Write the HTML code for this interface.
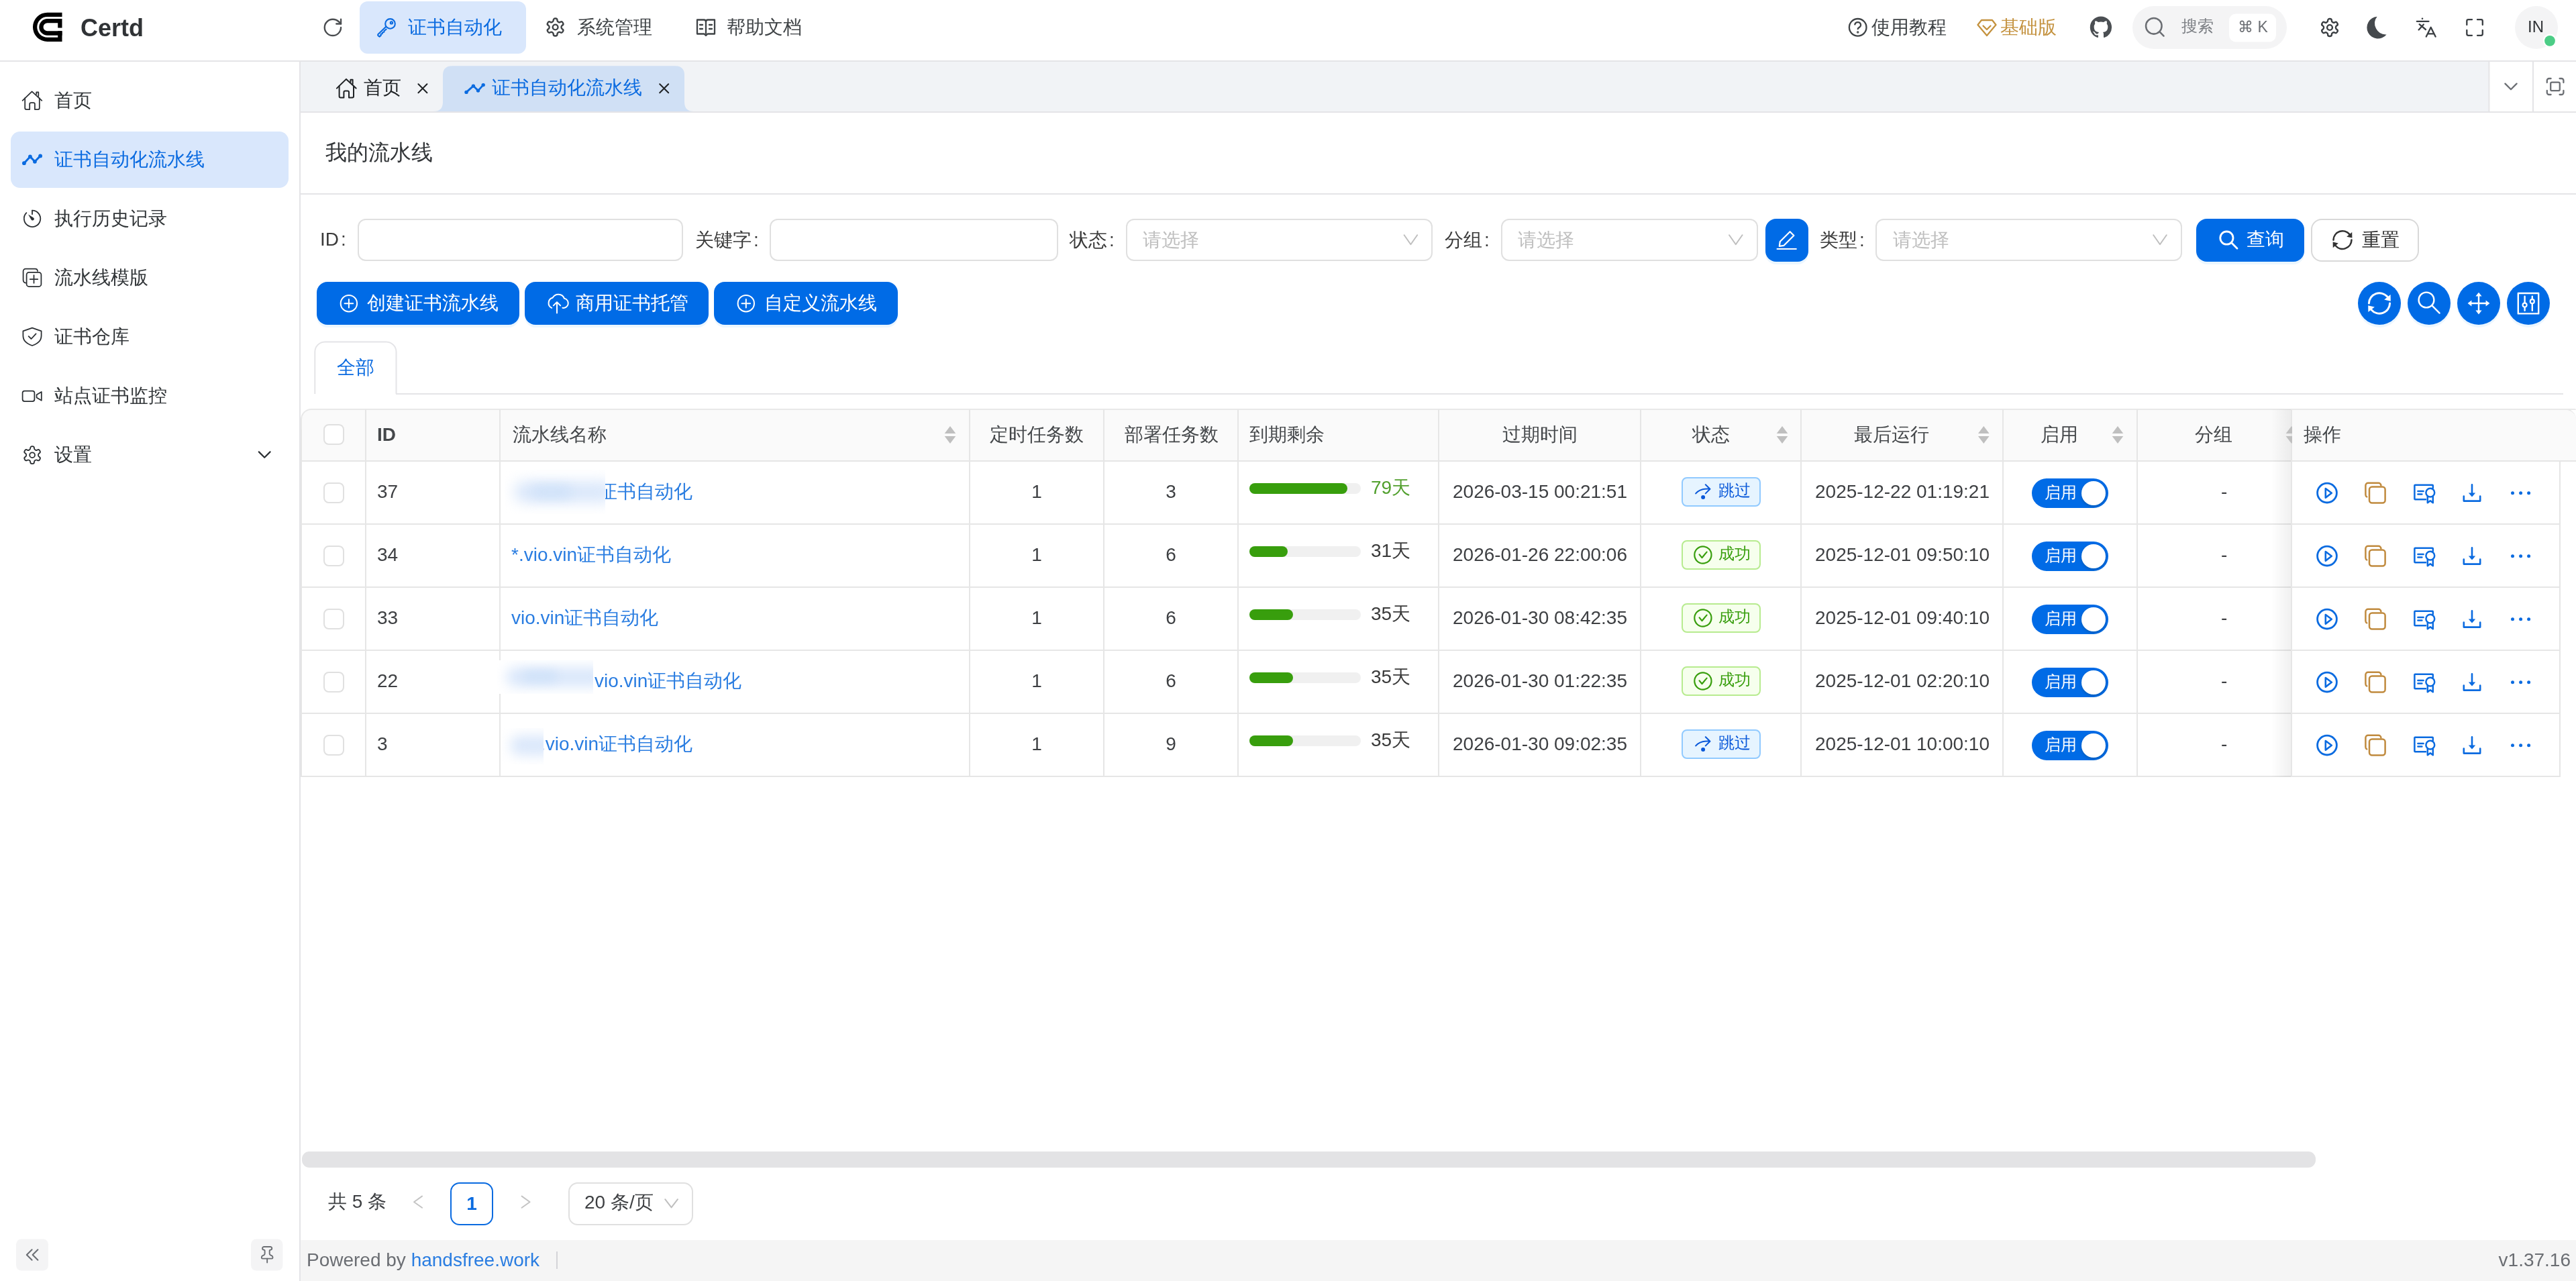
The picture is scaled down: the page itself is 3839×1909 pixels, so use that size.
<!DOCTYPE html>
<html><head><meta charset="utf-8">
<style>
*{box-sizing:border-box;margin:0;padding:0}
html,body{width:3839px;height:1909px;overflow:hidden;background:#fff}
body{position:relative;will-change:transform;font-family:"Liberation Sans",sans-serif;font-size:28px;line-height:28px;color:#323639}
.a{position:absolute;white-space:nowrap}
svg{display:block;overflow:visible}
.ic{fill:none;stroke-linecap:round;stroke-linejoin:round}
/* header */
#hdr{position:absolute;left:0;top:0;width:3839px;height:92px;background:#fff;border-bottom:2px solid #e4e4e7}
/* sidebar */
#side{position:absolute;left:0;top:92px;width:448px;height:1817px;background:#fff;border-right:2px solid #e4e4e7}
.mi{position:absolute;left:16px;width:414px;height:84px;border-radius:12px;display:flex;align-items:center}
.mi .t{position:absolute;left:65px;top:27px;color:#323639}
.mi svg{position:absolute;left:17px}
.mi.act{background:#d9e9fb}
.mi.act .t{color:#0b6be0}
/* tabbar */
#tabs{position:absolute;left:448px;top:92px;width:3391px;height:76px;background:#f1f3f6;border-bottom:2px solid #e4e4e7}
/* content */
#content{position:absolute;left:448px;top:168px;width:3391px;height:1680px;background:#fff}
#footer{position:absolute;left:448px;top:1848px;width:3391px;height:61px;background:#f5f5f5}
.inp{position:absolute;top:326px;height:63px;border:2px solid #e0e0e0;border-radius:12px;background:#fff}
.ph{position:absolute;top:16px;color:#bfbfbf}
.lbl{position:absolute;top:344px;color:#3a3a3a}
.btn{position:absolute;border-radius:16px;background:#006be6;color:#fff;box-shadow:0 4px 0 rgba(5,145,255,0.08)}
.rbtn{position:absolute;top:420px;width:64px;height:64px;border-radius:32px;background:#006be6;box-shadow:0 4px 0 rgba(5,145,255,0.08)}
.th{position:absolute;top:620px;color:#45484b}
.vl{position:absolute;width:2px;background:#e6e6e6}
.hl{position:absolute;height:2px;background:#e6e6e6}
.cb{position:absolute;left:482px;width:31px;height:31px;border:2px solid #e0e0e0;border-radius:8px;background:#fff}
.td{position:absolute;color:#3e4043}
.lnk{position:absolute;color:#2a7de1}
.bar{position:absolute;left:1862px;width:166px;height:16px;border-radius:8px;background:#f0f0f0}
.bar i{position:absolute;left:0;top:0;height:16px;border-radius:8px;background:#389e0d}
.tag{position:absolute;left:2506px;width:118px;height:44px;border-radius:8px;border:2px solid}
.tag.b{background:#e6f4ff;border-color:#91caff;color:#0958d9}
.tag.g{background:#f6ffed;border-color:#b7eb8f;color:#389e0d}
.tag span{position:absolute;left:53px;top:6px;font-size:24px;line-height:24px}
.tag svg{position:absolute;left:17px;top:9px}
.sw{position:absolute;left:3028px;width:114px;height:44px;border-radius:22px;background:#006be6}
.sw span{position:absolute;left:19px;top:9px;font-size:24px;line-height:24px;color:#fff}
.sw i{position:absolute;left:74px;top:4px;width:36px;height:36px;border-radius:18px;background:#fff;box-shadow:0 2px 4px rgba(0,35,11,.2)}
.dash{position:absolute;left:3311px;color:#3a3a3a}
.ops svg{position:absolute}
</style></head><body>

<!-- HEADER -->
<div id="hdr"></div>
<svg class="a" style="left:0;top:0" width="3839" height="91" viewBox="0 0 3839 91">
 <!-- logo -->
 <g transform="translate(48.9,18.7)" fill="#000">
  <path d="M43.6,0 H21.7 A21.65,21.65 0 0 0 21.7,43.3 H43.6 V27.6 H37.3 V37 H21.7 A15.35,15.35 0 0 1 21.7,6.3 H43.6 Z"/>
  <path d="M43.6,9.4 H21.7 A12.3,12.3 0 0 0 21.7,34 H43.6 V27.6 H21.7 A6.05,6.05 0 0 1 21.7,15.5 H37.3 V22.7 H43.6 Z"/>
 </g>
 <!-- refresh -->
 <g class="ic" stroke="#4a4d50" stroke-width="1.75" transform="translate(479.7,24.7) scale(1.35)">
  <path d="M21 12a9 9 0 1 1-9-9c2.52 0 4.93 1 6.74 2.74L21 8"/><path d="M21 3v5h-5"/>
 </g>
 <!-- active pill -->
 <rect x="536" y="2" width="248" height="78" rx="12" fill="#d9e7fc"/>
 <!-- key -->
 <g class="ic" stroke="#0b6be0" stroke-width="2.1">
  <circle cx="581.5" cy="35.4" r="7.3"/>
  <circle cx="583.4" cy="33.9" r="1.6"/>
  <path d="M575.2,39.8 L563.3,51.2 Q562.6,52.4 563.8,53.4 L565.6,54.6 L567.8,52.6 L567.6,50.8 L569.8,50.2 L570,48.4 L572.3,47.8 L572.6,46 L575.6,43.6"/>
 </g>
 <!-- gear nav -->
 <g class="ic" stroke="#3f4346" stroke-width="1.85" transform="translate(812,24.9) scale(1.3)">
  <path d="M12.22 2h-.44a2 2 0 0 0-2 2v.18a2 2 0 0 1-1 1.73l-.43.25a2 2 0 0 1-2 0l-.15-.08a2 2 0 0 0-2.73.73l-.22.38a2 2 0 0 0 .73 2.73l.15.1a2 2 0 0 1 1 1.72v.51a2 2 0 0 1-1 1.74l-.15.09a2 2 0 0 0-.73 2.73l.22.38a2 2 0 0 0 2.73.73l.15-.08a2 2 0 0 1 2 0l.43.25a2 2 0 0 1 1 1.73V20a2 2 0 0 0 2 2h.44a2 2 0 0 0 2-2v-.18a2 2 0 0 1 1-1.730l.43-.25a2 2 0 0 1 2 0l.15.08a2 2 0 0 0 2.73-.73l.22-.39a2 2 0 0 0-.73-2.73l-.15-.08a2 2 0 0 1-1-1.74v-.5a2 2 0 0 1 1-1.74l.15-.09a2 2 0 0 0 .73-2.73l-.22-.38a2 2 0 0 0-2.73-.73l-.15.08a2 2 0 0 1-2 0l-.43-.25a2 2 0 0 1-1-1.73V4a2 2 0 0 0-2-2z"/><circle cx="12" cy="12" r="3"/>
 </g>
 <!-- book -->
 <g class="ic" stroke="#3f4346" stroke-width="2.3">
  <path d="M1039,29.5 H1049 Q1052,29.5 1052,32.5 Q1052,29.5 1055,29.5 H1065 V50.5 H1054.5 L1052,53 L1049.5,50.5 H1039 Z"/>
  <path d="M1052,32.5 V50"/>
  <path d="M1043,37 H1047 M1043,43 H1047 M1057,37 H1061 M1057,43 H1061"/>
 </g>
 <!-- help circle -->
 <g class="ic" stroke="#3f4346" stroke-width="2.3">
  <circle cx="2768.7" cy="40.8" r="12.8"/>
  <path d="M2764.3,36.3 a4.5,4.5 0 0 1 8.8,1.3 c0,3 -4.4,3.6 -4.4,5.6"/>
  <circle cx="2768.7" cy="48" r="0.6" fill="#3f4346"/>
 </g>
 <!-- diamond -->
 <g class="ic" stroke="#c4923f" stroke-width="2.3">
  <path d="M2953,30 H2969 L2974.5,37 L2961,53 L2947.5,37 Z"/>
  <path d="M2955.5,38.5 L2961,44 L2966.5,38.5"/>
 </g>
 <!-- github -->
 <g transform="translate(3114.8,24.6) scale(2.02)" fill="#4b4f53">
  <path d="M8 0C3.58 0 0 3.58 0 8c0 3.54 2.29 6.53 5.47 7.59.4.07.55-.17.55-.38 0-.19-.01-.82-.01-1.49-2.01.37-2.53-.49-2.69-.94-.09-.23-.48-.94-.82-1.130-.28-.15-.68-.52-.01-.53.63-.01 1.08.58 1.23.82.72 1.21 1.87.87 2.33.66.07-.52.28-.87.51-1.07-1.78-.2-3.64-.89-3.64-3.950 0-.87.31-1.59.82-2.15-.08-.2-.36-1.02.08-2.12 0 0 .67-.21 2.2.82.64-.18 1.32-.27 2-.27.68 0 1.36.09 2 .27 1.53-1.04 2.2-.82 2.2-.82.44 1.1.16 1.92.08 2.12.51.56.82 1.27.82 2.15 0 3.07-1.87 3.75-3.65 3.95.29.25.54.73.54 1.48 0 1.07-.01 1.93-.01 2.2 0 .21.15.46.55.38A8.013 8.013 0 0016 8c0-4.42-3.58-8-8-8z"/>
 </g>
 <!-- search pill -->
 <rect x="3178" y="9" width="230" height="64" rx="32" fill="#f4f4f5"/>
 <rect x="3322" y="20.5" width="70" height="42" rx="10" fill="#fff"/>
 <g class="ic" stroke="#6b6e73" stroke-width="1.7" transform="translate(3193.6,22.6) scale(1.475)">
  <circle cx="11" cy="11" r="8"/><path d="m21 21-4.3-4.3"/>
 </g>
 <!-- settings gear -->
 <g class="ic" stroke="#3a3e42" stroke-width="1.85" transform="translate(3456.4,25.4) scale(1.3)">
  <path d="M12.22 2h-.44a2 2 0 0 0-2 2v.18a2 2 0 0 1-1 1.73l-.43.25a2 2 0 0 1-2 0l-.15-.08a2 2 0 0 0-2.73.73l-.22.38a2 2 0 0 0 .73 2.730l.15.1a2 2 0 0 1 1 1.72v.51a2 2 0 0 1-1 1.74l-.15.09a2 2 0 0 0-.73 2.73l.22.38a2 2 0 0 0 2.73.73l.15-.08a2 2 0 0 1 2 0l.43.25a2 2 0 0 1 1 1.73V20a2 2 0 0 0 2 2h.44a2 2 0 0 0 2-2v-.18a2 2 0 0 1 1-1.73l.43-.25a2 2 0 0 1 2 0l.15.08a2 2 0 0 0 2.73-.73l.22-.39a2 2 0 0 0-.73-2.73l-.15-.08a2 2 0 0 1-1-1.74v-.5a2 2 0 0 1 1-1.74l.15-.09a2 2 0 0 0 .73-2.73l-.22-.38a2 2 0 0 0-2.73-.73l-.15.08a2 2 0 0 1-2 0l-.43-.25a2 2 0 0 1-1-1.73V4a2 2 0 0 0-2-2z"/><circle cx="12" cy="12" r="3"/>
 </g>
 <!-- moon -->
 <path d="M3542.6,24.8 A16.4,16.4 0 1 0 3556.6,51.4 A16.5,16.5 0 0 1 3542.6,24.8 Z" fill="#45494d"/>
 <!-- translate -->
 <g class="ic" stroke="#3a3e42" stroke-width="2.3">
  <path d="M3601.8,31.8 H3619.5"/>
  <path d="M3605.6,36.2 L3615,44 M3611.8,36.4 L3604.6,44.4"/>
  <path d="M3615.8,54.6 L3622.7,40.8 L3629.6,54.6 M3618.2,50.4 H3627.2"/>
 </g>
 <circle cx="3610" cy="27.8" r="1.3" fill="#3a3e42"/>
 <!-- fullscreen -->
 <g class="ic" stroke="#3a3e42" stroke-width="2.3">
  <path d="M3684,29.2 H3678.5 a2.2,2.2 0 0 0 -2.2,2.2 V37"/>
  <path d="M3692,29.2 H3697.6 a2.2,2.2 0 0 1 2.2,2.2 V37"/>
  <path d="M3676.3,45 V50.6 a2.2,2.2 0 0 0 2.2,2.2 H3684"/>
  <path d="M3699.8,45 V50.6 a2.2,2.2 0 0 1 -2.2,2.2 H3692"/>
 </g>
 <!-- avatar -->
 <circle cx="3780" cy="41" r="32" fill="#f4f4f5"/>
 <circle cx="3800" cy="60.8" r="10.2" fill="#fff"/>
 <circle cx="3800" cy="60.8" r="7.9" fill="#4ccd86"/>
</svg>
<div class="a" style="left:120px;top:24px;font-size:36px;line-height:36px;font-weight:bold;color:#303336">Certd</div>
<div class="a" style="left:608px;top:27px;color:#0b6be0">证书自动化</div>
<div class="a" style="left:860px;top:27px;color:#3f4346">系统管理</div>
<div class="a" style="left:1083px;top:27px;color:#3f4346">帮助文档</div>
<div class="a" style="left:2789px;top:27px;color:#3f4346">使用教程</div>
<div class="a" style="left:2981px;top:27px;color:#c4923f">基础版</div>
<div class="a" style="left:3251px;top:27px;font-size:24px;line-height:24px;color:#7c7f84">搜索</div>
<div class="a" style="left:3335px;top:28px;font-size:23px;line-height:24px;color:#6b6e73">⌘ K</div>
<div class="a" style="left:3767px;top:28px;font-size:24px;line-height:24px;color:#303336">IN</div>

<!-- SIDEBAR -->
<div id="side"></div>
<svg class="a" style="left:0;top:0" width="448" height="1909" viewBox="0 0 448 1909">
 <rect x="16" y="196" width="414" height="84" rx="14" fill="#d9e7fc"/>
 <g class="ic" stroke="#2b2f33" stroke-width="1.75">
  <path d="M33.6,149.8 L47.6,136.4 L62.3,149.8"/>
  <path d="M37.2,146.2 V161 a2,2 0 0 0 2,2 H44.2 V155 a2,2 0 0 1 2,-2 H49.9 a2,2 0 0 1 2,2 V163 H56.8 a2,2 0 0 0 2,-2 V146.2"/>
  <path d="M54.2,140.4 V137.4 H57.3 V143.6"/>
 </g>
 <g class="ic" stroke="#0b6be0" stroke-width="3">
  <path d="M35.9,243.2 L44.9,233.4 L51.9,240.8 L60.1,232.4"/>
 </g>
 <g fill="#0b6be0"><circle cx="35.9" cy="243.2" r="2.9"/><circle cx="44.9" cy="233.4" r="2.9"/><circle cx="51.9" cy="240.8" r="2.9"/><circle cx="60.1" cy="232.4" r="2.9"/></g>
 <g class="ic" stroke="#2b2f33" stroke-width="1.8">
  <path d="M48,313.6 A12.2,12.2 0 1 1 39.4,317.2"/>
  <path d="M48,313.6 V319.2"/>
 </g>
 <path d="M42,319.6 L49.6,324.2 A2.3,2.3 0 1 1 46.6,327.4 Z" fill="#2b2f33"/>
 <g class="ic" stroke="#2b2f33" stroke-width="1.75">
  <path d="M38.4,421.6 Q34.6,421 34.6,417.2 V404.2 a3.6,3.6 0 0 1 3.6,-3.6 H52.4 a3.6,3.6 0 0 1 3.6,3.4"/>
  <rect x="39.6" y="405.8" width="21.8" height="21.2" rx="3.6"/>
  <path d="M50.5,410.2 V421.8 M44.7,416 H56.3"/>
 </g>
 <g class="ic" stroke="#2b2f33" stroke-width="1.75">
  <path d="M48,488.6 L61.6,493.4 V500.2 Q61.6,510.6 48,515 Q34.4,510.6 34.4,500.2 V493.4 Z"/>
  <path d="M42.6,501.2 L46.6,505 L53.6,497.4"/>
 </g>
 <g class="ic" stroke="#2b2f33" stroke-width="1.75">
  <rect x="33.6" y="582.6" width="17.8" height="15.4" rx="3"/>
  <path d="M54.6,588.2 L61.8,584 V596.8 L54.6,592.6 Z"/>
 </g>
 <g class="ic" stroke="#2b2f33" stroke-width="1.4" transform="translate(32.5,662.6) scale(1.3)">
  <path d="M12.22 2h-.44a2 2 0 0 0-2 2v.18a2 2 0 0 1-1 1.73l-.43.25a2 2 0 0 1-2 0l-.15-.08a2 2 0 0 0-2.73.73l-.22.38a2 2 0 0 0 .73 2.73l.15.1a2 2 0 0 1 1 1.72v.51a2 2 0 0 1-1 1.74l-.15.09a2 2 0 0 0-.73 2.73l.22.38a2 2 0 0 0 2.73.73l.15-.08a2 2 0 0 1 2 0l.43.25a2 2 0 0 1 1 1.73V20a2 2 0 0 0 2 2h.44a2 2 0 0 0 2-2v-.18a2 2 0 0 1 1-1.73l.43-.25a2 2 0 0 1 2 0l.15.08a2 2 0 0 0 2.73-.73l.22-.39a2 2 0 0 0-.73-2.73l-.15-.08a2 2 0 0 1-1-1.74v-.5a2 2 0 0 1 1-1.74l.15-.09a2 2 0 0 0 .73-2.73l-.22-.38a2 2 0 0 0-2.73-.73l-.15.08a2 2 0 0 1-2 0l-.43-.25a2 2 0 0 1-1-1.73V4a2 2 0 0 0-2-2z"/><circle cx="12" cy="12" r="3"/>
 </g>
 <path class="ic" stroke="#2b2f33" stroke-width="2.2" d="M385.8,673.4 L394.2,681.8 L402.6,673.4"/>
 <rect x="24" y="1846.4" width="48" height="47.2" rx="8" fill="#f4f4f5"/>
 <rect x="374" y="1846.4" width="47.4" height="47.2" rx="8" fill="#f4f4f5"/>
 <g class="ic" stroke="#6b6e73" stroke-width="2">
  <path d="M47.6,1862.2 L39.8,1870 L47.6,1877.8 M56.4,1862.2 L48.6,1870 L56.4,1877.8"/>
 </g>
 <g class="ic" stroke="#6b6e73" stroke-width="1.9" transform="translate(384,1855.6) scale(1.18)" style="vector-effect:non-scaling-stroke">
  <path vector-effect="non-scaling-stroke" d="M12 17v5"/><path vector-effect="non-scaling-stroke" d="M9 10.76a2 2 0 0 1-1.11 1.79l-1.78.9A2 2 0 0 0 5 15.24V16a1 1 0 0 0 1 1h12a1 1 0 0 0 1-1v-.76a2 2 0 0 0-1.11-1.79l-1.78-.9A2 2 0 0 1 15 10.76V7a1 1 0 0 1 1-1 2 2 0 0 0 0-4H8a2 2 0 0 0 0 4 1 1 0 0 1 1 1z"/>
 </g>
</svg>
<div class="a" style="left:81px;top:136px">首页</div>
<div class="a" style="left:81px;top:224px;color:#0b6be0">证书自动化流水线</div>
<div class="a" style="left:81px;top:312px">执行历史记录</div>
<div class="a" style="left:81px;top:400px">流水线模版</div>
<div class="a" style="left:81px;top:488px">证书仓库</div>
<div class="a" style="left:81px;top:576px">站点证书监控</div>
<div class="a" style="left:81px;top:664px">设置</div>

<!-- TABBAR -->
<div id="tabs"></div>
<svg class="a" style="left:0;top:0" width="3839" height="300" viewBox="0 0 3839 300">
 <path d="M646,166 Q660,166 660,152 V112 Q660,98.3 674,98.3 H1006 Q1020,98.3 1020,112 V152 Q1020,166 1034,166 Z" fill="#d0e0f5"/>
 <g class="ic" stroke="#1f2225" stroke-width="2">
  <path d="M501.9,131.6 L516,117.9 L530.6,131.6"/>
  <path d="M505.6,128 V143.6 a2,2 0 0 0 2,2 H512.4 V137.4 a2,2 0 0 1 2,-2 H518 a2,2 0 0 1 2,2 V145.6 H525 a2,2 0 0 0 2,-2 V128"/>
  <path d="M522.4,122 V118.8 H525.6 V125.2"/>
  <path d="M623.4,125.2 L636.4,138.2 M636.4,125.2 L623.4,138.2"/>
  <path d="M983.2,125.2 L996.2,138.2 M996.2,125.2 L983.2,138.2"/>
 </g>
 <g class="ic" stroke="#0b6be0" stroke-width="2.8">
  <path d="M695,137.4 L705.4,128.1 L712.5,135.1 L720.2,126.6"/>
 </g>
 <g fill="#0b6be0"><circle cx="695" cy="137.4" r="2.7"/><circle cx="705.4" cy="128.1" r="2.7"/><circle cx="712.5" cy="135.1" r="2.7"/><circle cx="720.2" cy="126.6" r="2.7"/></g>
 <rect x="3710" y="92" width="129" height="74" fill="#fff"/>
 <rect x="3708.4" y="92" width="2" height="74" fill="#e4e4e7"/>
 <rect x="3774" y="92" width="2" height="74" fill="#e4e4e7"/>
 <path class="ic" stroke="#6b6e73" stroke-width="2.3" d="M3733.4,124.6 L3742,133.2 L3750.6,124.6"/>
 <g class="ic" stroke="#6b6e73" stroke-width="2.3">
  <path d="M3795.8,123 V120 a3,3 0 0 1 3,-3 H3801.6 M3814.6,117 H3817.4 a3,3 0 0 1 3,3 V123 M3820.4,135 V138 a3,3 0 0 1 -3,3 H3814.6 M3801.6,141 H3798.8 a3,3 0 0 1 -3,-3 V135"/>
  <rect x="3801.2" y="122.6" width="13.6" height="12.6" rx="2"/>
 </g>
</svg>
<div class="a" style="left:542px;top:117px;color:#1f2225">首页</div>
<div class="a" style="left:733px;top:117px;color:#0b6be0">证书自动化流水线</div>

<!-- CONTENT -->
<div id="content"></div>
<div class="a" style="left:485px;top:211px;font-size:32px;line-height:32px;color:#333639">我的流水线</div>
<div class="a" style="left:448px;top:288px;width:3391px;height:2px;background:#e4e4e7"></div>

<!-- FORM -->
<div class="a lbl" style="left:477px;top:343px">ID<span style="margin-left:3px">:</span></div>
<div class="inp" style="left:533px;width:485px"></div>
<div class="a lbl" style="left:1036px;top:344px">关键字<span style="margin-left:3px">:</span></div>
<div class="inp" style="left:1147px;width:430px"></div>
<div class="a lbl" style="left:1594px;top:344px">状态<span style="margin-left:3px">:</span></div>
<div class="inp" style="left:1678px;width:457px"><div class="a ph" style="left:23px">请选择</div></div>
<div class="a lbl" style="left:2153px;top:344px">分组<span style="margin-left:3px">:</span></div>
<div class="inp" style="left:2237px;width:383px"><div class="a ph" style="left:23px">请选择</div></div>
<div class="a btn" style="left:2631px;top:326px;width:64px;height:64px"></div>
<div class="a lbl" style="left:2712px;top:344px">类型<span style="margin-left:3px">:</span></div>
<div class="inp" style="left:2795px;width:457px"><div class="a ph" style="left:24px">请选择</div></div>
<div class="a btn" style="left:3273px;top:326px;width:161px;height:64px"><div class="a" style="left:75px;top:17px">查询</div></div>
<div class="a" style="left:3444px;top:326px;width:161px;height:64px;border:2px solid #d9d9d9;border-radius:16px;background:#fff"><div class="a" style="left:74px;top:16px;color:#333">重置</div></div>
<!-- BUTTON ROW -->
<div class="a btn" style="left:472px;top:420px;width:302px;height:64px"><div class="a" style="left:75px;top:18px">创建证书流水线</div></div>
<div class="a btn" style="left:782px;top:420px;width:274px;height:64px"><div class="a" style="left:76px;top:18px">商用证书托管</div></div>
<div class="a btn" style="left:1064px;top:420px;width:274px;height:64px"><div class="a" style="left:75px;top:18px">自定义流水线</div></div>
<div class="rbtn" style="left:3514px"></div>
<div class="rbtn" style="left:3588px"></div>
<div class="rbtn" style="left:3662px"></div>
<div class="rbtn" style="left:3736px"></div>
<svg class="a" style="left:0;top:0" width="3839" height="520" viewBox="0 0 3839 520">
 <!-- select chevrons -->
 <g class="ic" stroke="#bfbfbf" stroke-width="2">
  <path d="M2092.6,350.2 L2102.4,364.2 L2112.2,350.2"/>
  <path d="M2577,350.2 L2586.8,364.2 L2596.6,350.2"/>
  <path d="M3209.2,350.2 L3219,364.2 L3228.8,350.2"/>
 </g>
 <!-- edit pencil -->
 <g class="ic" stroke="#fff" stroke-width="2.2">
  <path d="M2648.6,371 H2676.8"/>
  <path d="M2667.6,345.2 L2673.4,351 L2658.6,365.8 L2651.8,366.8 L2652.8,360 Z"/>
 </g>
 <!-- query search -->
 <g class="ic" stroke="#fff" stroke-width="2.8">
  <circle cx="3318.4" cy="354.6" r="9.6"/><path d="M3325.4,361.6 L3334,370.2"/>
 </g>
 <!-- reset sync -->
 <g class="ic" stroke="#333" stroke-width="2.6" stroke-linecap="butt">
  <path d="M3477.5,357.6 A13.5,13.5 0 0 1 3501.4,349.2"/>
  <path d="M3504.5,357.6 A13.5,13.5 0 0 1 3480.6,366"/>
 </g>
 <path d="M3505.2,346 L3505.4,354.6 L3497.2,352.8 Z" fill="#333"/>
 <path d="M3476.8,369.2 L3476.6,360.6 L3484.8,362.4 Z" fill="#333"/>
 <!-- btn icons -->
 <g class="ic" stroke="#fff" stroke-width="2">
  <circle cx="519.9" cy="452.2" r="12.2"/><path d="M513.6,452.2 H526.2 M519.9,445.9 V458.5"/>
  <circle cx="1111.8" cy="452.2" r="12.2"/><path d="M1105.5,452.2 H1118.1 M1111.8,445.9 V458.5"/>
  <path d="M830,450.4 V466.4 M824.8,455.4 L830,450.2 L835.2,455.4"/>
  <path d="M822.2,458.8 A8,8 0 0 1 823.6,443.8 A9.6,9.6 0 0 1 841,444.8 A6.6,6.6 0 0 1 838.4,458.8"/>
 </g>
 <!-- round toolbar icons -->
 <g class="ic" stroke="#fff" stroke-width="3" stroke-linecap="butt">
  <path d="M3530.4,452 A15.6,15.6 0 0 1 3558,442.4"/>
  <path d="M3561.6,452 A15.6,15.6 0 0 1 3534,461.6"/>
 </g>
 <path d="M3562.6,439 L3562.8,448.8 L3553.2,446.6 Z" fill="#fff"/>
 <path d="M3529.4,465 L3529.2,455.2 L3538.8,457.4 Z" fill="#fff"/>
 <g class="ic" stroke="#fff" stroke-width="2.4">
  <circle cx="3616" cy="447" r="11.4"/><path d="M3624.2,455.2 L3635.6,466.6"/>
 </g>
 <g class="ic" stroke="#fff" stroke-width="2.4">
  <path d="M3694,438.4 V465.8 M3680.2,452 H3707.8"/>
 </g>
 <path d="M3694,435.8 L3689.4,441.6 H3698.6 Z M3694,468.4 L3689.4,462.6 H3698.6 Z M3677.6,452 L3683.4,447.4 V456.6 Z M3710.4,452 L3704.6,447.4 V456.6 Z" fill="#fff"/>
 <g class="ic" stroke="#fff" stroke-width="2.4" stroke-linecap="butt">
  <rect x="3752.8" y="437" width="30.4" height="30.4" rx="0"/>
  <path d="M3762.6,441.6 V462.8 M3773.8,441.6 V462.8"/>
 </g>
 <circle cx="3762.6" cy="454.6" r="3" fill="#006be6" stroke="#fff" stroke-width="2.2"/>
 <circle cx="3773.8" cy="449.2" r="3" fill="#006be6" stroke="#fff" stroke-width="2.2"/>
 <!-- tab 全部 -->
 <path d="M469.3,587 V524.5 A15,15 0 0 1 484.3,509.5 H575.5 A15,15 0 0 1 590.5,524.5 V587" fill="#fff" stroke="#e4e4e7" stroke-width="2"/>
 <rect x="590" y="586" width="3230" height="2" fill="#e4e4e7"/>
</svg>
<div class="a" style="left:502px;top:534px;color:#0b6be0">全部</div>
<!-- TABLE -->
<div class="a" style="left:448px;top:609px;width:3391px;height:78px;background:#fafafa;border-top:2px solid #e8e8e8;border-left:2px solid #e8e8e8;border-radius:16px 16px 0 0"></div>
<div class="hl" style="left:448px;top:686px;width:3367px"></div>
<div class="hl" style="left:448px;top:780px;width:3367px"></div>
<div class="hl" style="left:448px;top:874px;width:3367px"></div>
<div class="hl" style="left:448px;top:968px;width:3367px"></div>
<div class="hl" style="left:448px;top:1062px;width:3367px"></div>
<div class="hl" style="left:448px;top:1156px;width:3367px"></div>
<div class="hl" style="left:3415px;top:686px;width:424px"></div>
<div class="vl" style="left:448px;top:640px;height:518px"></div>
<div class="vl" style="left:544.0px;top:610px;height:548px"></div>
<div class="vl" style="left:744.0px;top:610px;height:548px"></div>
<div class="vl" style="left:1443.5px;top:610px;height:548px"></div>
<div class="vl" style="left:1643.5px;top:610px;height:548px"></div>
<div class="vl" style="left:1843.5px;top:610px;height:548px"></div>
<div class="vl" style="left:2143.2px;top:610px;height:548px"></div>
<div class="vl" style="left:2443.7px;top:610px;height:548px"></div>
<div class="vl" style="left:2683.3px;top:610px;height:548px"></div>
<div class="vl" style="left:2983.8px;top:610px;height:548px"></div>
<div class="vl" style="left:3183.8px;top:610px;height:548px"></div>
<div class="vl" style="left:3814px;top:687px;height:471px"></div>
<div class="a" style="left:3385px;top:610px;width:30px;height:548px;background:linear-gradient(to right,rgba(0,0,0,0),rgba(0,0,0,0.06))"></div>
<div class="vl" style="left:3414px;top:610px;height:548px"></div>
<div class="cb" style="top:632px"></div>
<div class="a th" style="left:562px;top:634px"><b style="font-weight:bold">ID</b></div>
<div class="a th" style="left:764px;top:634px">流水线名称</div>
<div class="a th" style="left:1475px;top:634px">定时任务数</div>
<div class="a th" style="left:1676px;top:634px">部署任务数</div>
<div class="a th" style="left:1862px;top:634px">到期剩余</div>
<div class="a th" style="left:2239px;top:634px">过期时间</div>
<div class="a th" style="left:2522px;top:634px">状态</div>
<div class="a th" style="left:2763px;top:634px">最后运行</div>
<div class="a th" style="left:3041px;top:634px">启用</div>
<div class="a th" style="left:3271px;top:634px">分组</div>
<div class="a th" style="left:3433px;top:634px">操作</div>
<svg class="a" style="left:0;top:0" width="3839" height="1300" viewBox="0 0 3839 1300">
<path d="M1407.7,646 L1416,635 L1424.3,646 Z M1407.7,650 L1416,661 L1424.3,650 Z" fill="#bfbfbf"/>
<path d="M2647.7,646 L2656,635 L2664.3,646 Z M2647.7,650 L2656,661 L2664.3,650 Z" fill="#bfbfbf"/>
<path d="M2948.0,646 L2956.3,635 L2964.6000000000004,646 Z M2948.0,650 L2956.3,661 L2964.6000000000004,650 Z" fill="#bfbfbf"/>
<path d="M3147.7,646 L3156,635 L3164.3,646 Z M3147.7,650 L3156,661 L3164.3,650 Z" fill="#bfbfbf"/>
<path d="M3406.7,646 L3415,635 L3423.3,646 Z M3406.7,650 L3415,661 L3423.3,650 Z" fill="#bfbfbf"/>
</svg>
<div class="a" style="left:3416px;top:611px;width:423px;height:75px;background:#fafafa;border-radius:0 16px 0 0"></div>
<div class="a" style="left:3416px;top:609px;width:423px;height:2px;background:#e8e8e8;border-radius:0 16px 0 0"></div>
<div class="a th" style="left:3433px;top:634px">操作</div>
<div class="cb" style="top:719px"></div>
<div class="a td" style="left:562px;top:719px">37</div>
<div class="a lnk" style="left:892px;top:719px">证书自动化</div>
<div class="a td" style="left:1445px;top:719px;width:200px;text-align:center">1</div>
<div class="a td" style="left:1645px;top:719px;width:200px;text-align:center">3</div>
<div class="bar" style="top:720px"><i style="width:146px"></i></div>
<div class="a" style="left:2043px;top:713px;color:#52a02e">79天</div>
<div class="a td" style="left:2145px;top:719px;width:300px;text-align:center">2026-03-15 00:21:51</div>
<div class="tag b" style="top:711px"><span>跳过</span></div>
<div class="a td" style="left:2685px;top:719px;width:300px;text-align:center">2025-12-22 01:19:21</div>
<div class="sw" style="top:713px"><span>启用</span><i></i></div>
<div class="a td" style="left:3310px;top:719px">-</div>
<div class="cb" style="top:813px"></div>
<div class="a td" style="left:562px;top:813px">34</div>
<div class="a lnk" style="left:762px;top:813px">*.vio.vin证书自动化</div>
<div class="a td" style="left:1445px;top:813px;width:200px;text-align:center">1</div>
<div class="a td" style="left:1645px;top:813px;width:200px;text-align:center">6</div>
<div class="bar" style="top:814px"><i style="width:57px"></i></div>
<div class="a" style="left:2043px;top:807px;color:#3a3a3a">31天</div>
<div class="a td" style="left:2145px;top:813px;width:300px;text-align:center">2026-01-26 22:00:06</div>
<div class="tag g" style="top:805px"><span>成功</span></div>
<div class="a td" style="left:2685px;top:813px;width:300px;text-align:center">2025-12-01 09:50:10</div>
<div class="sw" style="top:807px"><span>启用</span><i></i></div>
<div class="a td" style="left:3310px;top:813px">-</div>
<div class="cb" style="top:907px"></div>
<div class="a td" style="left:562px;top:907px">33</div>
<div class="a lnk" style="left:762px;top:907px">vio.vin证书自动化</div>
<div class="a td" style="left:1445px;top:907px;width:200px;text-align:center">1</div>
<div class="a td" style="left:1645px;top:907px;width:200px;text-align:center">6</div>
<div class="bar" style="top:908px"><i style="width:65px"></i></div>
<div class="a" style="left:2043px;top:901px;color:#3a3a3a">35天</div>
<div class="a td" style="left:2145px;top:907px;width:300px;text-align:center">2026-01-30 08:42:35</div>
<div class="tag g" style="top:899px"><span>成功</span></div>
<div class="a td" style="left:2685px;top:907px;width:300px;text-align:center">2025-12-01 09:40:10</div>
<div class="sw" style="top:901px"><span>启用</span><i></i></div>
<div class="a td" style="left:3310px;top:907px">-</div>
<div class="cb" style="top:1001px"></div>
<div class="a td" style="left:562px;top:1001px">22</div>
<div class="a lnk" style="left:886px;top:1001px">vio.vin证书自动化</div>
<div class="a td" style="left:1445px;top:1001px;width:200px;text-align:center">1</div>
<div class="a td" style="left:1645px;top:1001px;width:200px;text-align:center">6</div>
<div class="bar" style="top:1002px"><i style="width:65px"></i></div>
<div class="a" style="left:2043px;top:995px;color:#3a3a3a">35天</div>
<div class="a td" style="left:2145px;top:1001px;width:300px;text-align:center">2026-01-30 01:22:35</div>
<div class="tag g" style="top:993px"><span>成功</span></div>
<div class="a td" style="left:2685px;top:1001px;width:300px;text-align:center">2025-12-01 02:20:10</div>
<div class="sw" style="top:995px"><span>启用</span><i></i></div>
<div class="a td" style="left:3310px;top:1001px">-</div>
<div class="cb" style="top:1095px"></div>
<div class="a td" style="left:562px;top:1095px">3</div>
<div class="a lnk" style="left:805px;top:1095px">.vio.vin证书自动化</div>
<div class="a td" style="left:1445px;top:1095px;width:200px;text-align:center">1</div>
<div class="a td" style="left:1645px;top:1095px;width:200px;text-align:center">9</div>
<div class="bar" style="top:1096px"><i style="width:65px"></i></div>
<div class="a" style="left:2043px;top:1089px;color:#3a3a3a">35天</div>
<div class="a td" style="left:2145px;top:1095px;width:300px;text-align:center">2026-01-30 09:02:35</div>
<div class="tag b" style="top:1087px"><span>跳过</span></div>
<div class="a td" style="left:2685px;top:1095px;width:300px;text-align:center">2025-12-01 10:00:10</div>
<div class="sw" style="top:1089px"><span>启用</span><i></i></div>
<div class="a td" style="left:3310px;top:1095px">-</div>

<!-- FOOTER -->
<div id="footer"></div>

<svg class="a" style="left:0;top:0" width="3839" height="1909" viewBox="0 0 3839 1909">
<g class="ic" stroke="#0958d9" stroke-width="2" transform="translate(0,0)"><path d="M2527.2,735.4 Q2534,727.6 2548.2,728.6 M2541.8,722.2 L2548.4,728.7 L2541.8,735.4"/></g>
<circle cx="2538.1" cy="740.9" r="3" fill="#0958d9"/>
<g transform="translate(0,0)">
<g class="ic" stroke="#0b6be0" stroke-width="2.8"><circle cx="3468" cy="734.6" r="14.4"/></g>
<path d="M3465.8,728 L3474.8,734.8 L3465.8,741.6 Z" fill="none" stroke="#0b6be0" stroke-width="2.6" stroke-linejoin="round"/>
<g class="ic" stroke="#c08a3e" stroke-width="2.5"><path d="M3527.2,740.4 Q3525.4,739.6 3525.4,737 V723.6 a3.8,3.8 0 0 1 3.8,-3.8 H3544.6 a3.8,3.8 0 0 1 3.8,3.6"/><rect x="3531" y="725.4" width="23.6" height="24.2" rx="4"/></g>
<g class="ic" stroke="#0b6be0" stroke-width="2.5"><path d="M3615,744.2 H3599.2 Q3598.4,744.2 3598.4,743.4 V723.6 Q3598.4,722.8 3599.2,722.8 H3625 Q3625.8,722.8 3625.8,723.6 V727.2"/><path d="M3603.4,732 H3611.6 M3603.4,736.6 H3609.4"/><circle cx="3621.8" cy="734.2" r="6.4"/><path d="M3617.8,739.4 V749.2 L3621.8,746.2 L3625.8,749.2 V739.4"/></g>
<g class="ic" stroke="#0b6be0" stroke-width="2.6" stroke-linecap="butt"><path d="M3684,722.4 V737"/><path d="M3671.8,739.6 V746.6 H3696.2 V739.6"/></g>
<path d="M3678.8,734.4 L3684,740.6 L3689.2,734.4 Z" fill="#0b6be0"/>
<g fill="#0b6be0"><circle cx="3744.5" cy="734.8" r="2.5"/><circle cx="3756.6" cy="734.8" r="2.5"/><circle cx="3768.6" cy="734.8" r="2.5"/></g>
</g>
<g class="ic" stroke="#389e0d" stroke-width="2.2" transform="translate(0,0)"><circle cx="2537.9" cy="827" r="12.6"/><path d="M2532.6,826.3 L2536.4,831.2 L2543.6,822.6"/></g>
<g transform="translate(0,94)">
<g class="ic" stroke="#0b6be0" stroke-width="2.8"><circle cx="3468" cy="734.6" r="14.4"/></g>
<path d="M3465.8,728 L3474.8,734.8 L3465.8,741.6 Z" fill="none" stroke="#0b6be0" stroke-width="2.6" stroke-linejoin="round"/>
<g class="ic" stroke="#c08a3e" stroke-width="2.5"><path d="M3527.2,740.4 Q3525.4,739.6 3525.4,737 V723.6 a3.8,3.8 0 0 1 3.8,-3.8 H3544.6 a3.8,3.8 0 0 1 3.8,3.6"/><rect x="3531" y="725.4" width="23.6" height="24.2" rx="4"/></g>
<g class="ic" stroke="#0b6be0" stroke-width="2.5"><path d="M3615,744.2 H3599.2 Q3598.4,744.2 3598.4,743.4 V723.6 Q3598.4,722.8 3599.2,722.8 H3625 Q3625.8,722.8 3625.8,723.6 V727.2"/><path d="M3603.4,732 H3611.6 M3603.4,736.6 H3609.4"/><circle cx="3621.8" cy="734.2" r="6.4"/><path d="M3617.8,739.4 V749.2 L3621.8,746.2 L3625.8,749.2 V739.4"/></g>
<g class="ic" stroke="#0b6be0" stroke-width="2.6" stroke-linecap="butt"><path d="M3684,722.4 V737"/><path d="M3671.8,739.6 V746.6 H3696.2 V739.6"/></g>
<path d="M3678.8,734.4 L3684,740.6 L3689.2,734.4 Z" fill="#0b6be0"/>
<g fill="#0b6be0"><circle cx="3744.5" cy="734.8" r="2.5"/><circle cx="3756.6" cy="734.8" r="2.5"/><circle cx="3768.6" cy="734.8" r="2.5"/></g>
</g>
<g class="ic" stroke="#389e0d" stroke-width="2.2" transform="translate(0,94)"><circle cx="2537.9" cy="827" r="12.6"/><path d="M2532.6,826.3 L2536.4,831.2 L2543.6,822.6"/></g>
<g transform="translate(0,188)">
<g class="ic" stroke="#0b6be0" stroke-width="2.8"><circle cx="3468" cy="734.6" r="14.4"/></g>
<path d="M3465.8,728 L3474.8,734.8 L3465.8,741.6 Z" fill="none" stroke="#0b6be0" stroke-width="2.6" stroke-linejoin="round"/>
<g class="ic" stroke="#c08a3e" stroke-width="2.5"><path d="M3527.2,740.4 Q3525.4,739.6 3525.4,737 V723.6 a3.8,3.8 0 0 1 3.8,-3.8 H3544.6 a3.8,3.8 0 0 1 3.8,3.6"/><rect x="3531" y="725.4" width="23.6" height="24.2" rx="4"/></g>
<g class="ic" stroke="#0b6be0" stroke-width="2.5"><path d="M3615,744.2 H3599.2 Q3598.4,744.2 3598.4,743.4 V723.6 Q3598.4,722.8 3599.2,722.8 H3625 Q3625.8,722.8 3625.8,723.6 V727.2"/><path d="M3603.4,732 H3611.6 M3603.4,736.6 H3609.4"/><circle cx="3621.8" cy="734.2" r="6.4"/><path d="M3617.8,739.4 V749.2 L3621.8,746.2 L3625.8,749.2 V739.4"/></g>
<g class="ic" stroke="#0b6be0" stroke-width="2.6" stroke-linecap="butt"><path d="M3684,722.4 V737"/><path d="M3671.8,739.6 V746.6 H3696.2 V739.6"/></g>
<path d="M3678.8,734.4 L3684,740.6 L3689.2,734.4 Z" fill="#0b6be0"/>
<g fill="#0b6be0"><circle cx="3744.5" cy="734.8" r="2.5"/><circle cx="3756.6" cy="734.8" r="2.5"/><circle cx="3768.6" cy="734.8" r="2.5"/></g>
</g>
<g class="ic" stroke="#389e0d" stroke-width="2.2" transform="translate(0,188)"><circle cx="2537.9" cy="827" r="12.6"/><path d="M2532.6,826.3 L2536.4,831.2 L2543.6,822.6"/></g>
<g transform="translate(0,282)">
<g class="ic" stroke="#0b6be0" stroke-width="2.8"><circle cx="3468" cy="734.6" r="14.4"/></g>
<path d="M3465.8,728 L3474.8,734.8 L3465.8,741.6 Z" fill="none" stroke="#0b6be0" stroke-width="2.6" stroke-linejoin="round"/>
<g class="ic" stroke="#c08a3e" stroke-width="2.5"><path d="M3527.2,740.4 Q3525.4,739.6 3525.4,737 V723.6 a3.8,3.8 0 0 1 3.8,-3.8 H3544.6 a3.8,3.8 0 0 1 3.8,3.6"/><rect x="3531" y="725.4" width="23.6" height="24.2" rx="4"/></g>
<g class="ic" stroke="#0b6be0" stroke-width="2.5"><path d="M3615,744.2 H3599.2 Q3598.4,744.2 3598.4,743.4 V723.6 Q3598.4,722.8 3599.2,722.8 H3625 Q3625.8,722.8 3625.8,723.6 V727.2"/><path d="M3603.4,732 H3611.6 M3603.4,736.6 H3609.4"/><circle cx="3621.8" cy="734.2" r="6.4"/><path d="M3617.8,739.4 V749.2 L3621.8,746.2 L3625.8,749.2 V739.4"/></g>
<g class="ic" stroke="#0b6be0" stroke-width="2.6" stroke-linecap="butt"><path d="M3684,722.4 V737"/><path d="M3671.8,739.6 V746.6 H3696.2 V739.6"/></g>
<path d="M3678.8,734.4 L3684,740.6 L3689.2,734.4 Z" fill="#0b6be0"/>
<g fill="#0b6be0"><circle cx="3744.5" cy="734.8" r="2.5"/><circle cx="3756.6" cy="734.8" r="2.5"/><circle cx="3768.6" cy="734.8" r="2.5"/></g>
</g>
<g class="ic" stroke="#0958d9" stroke-width="2" transform="translate(0,376)"><path d="M2527.2,735.4 Q2534,727.6 2548.2,728.6 M2541.8,722.2 L2548.4,728.7 L2541.8,735.4"/></g>
<circle cx="2538.1" cy="1116.9" r="3" fill="#0958d9"/>
<g transform="translate(0,376)">
<g class="ic" stroke="#0b6be0" stroke-width="2.8"><circle cx="3468" cy="734.6" r="14.4"/></g>
<path d="M3465.8,728 L3474.8,734.8 L3465.8,741.6 Z" fill="none" stroke="#0b6be0" stroke-width="2.6" stroke-linejoin="round"/>
<g class="ic" stroke="#c08a3e" stroke-width="2.5"><path d="M3527.2,740.4 Q3525.4,739.6 3525.4,737 V723.6 a3.8,3.8 0 0 1 3.8,-3.8 H3544.6 a3.8,3.8 0 0 1 3.8,3.6"/><rect x="3531" y="725.4" width="23.6" height="24.2" rx="4"/></g>
<g class="ic" stroke="#0b6be0" stroke-width="2.5"><path d="M3615,744.2 H3599.2 Q3598.4,744.2 3598.4,743.4 V723.6 Q3598.4,722.8 3599.2,722.8 H3625 Q3625.8,722.8 3625.8,723.6 V727.2"/><path d="M3603.4,732 H3611.6 M3603.4,736.6 H3609.4"/><circle cx="3621.8" cy="734.2" r="6.4"/><path d="M3617.8,739.4 V749.2 L3621.8,746.2 L3625.8,749.2 V739.4"/></g>
<g class="ic" stroke="#0b6be0" stroke-width="2.6" stroke-linecap="butt"><path d="M3684,722.4 V737"/><path d="M3671.8,739.6 V746.6 H3696.2 V739.6"/></g>
<path d="M3678.8,734.4 L3684,740.6 L3689.2,734.4 Z" fill="#0b6be0"/>
<g fill="#0b6be0"><circle cx="3744.5" cy="734.8" r="2.5"/><circle cx="3756.6" cy="734.8" r="2.5"/><circle cx="3768.6" cy="734.8" r="2.5"/></g>
</g>
<g class="ic" stroke="#c4c4c4" stroke-width="2"><path d="M629,1782.6 L617,1791.2 L629,1799.8"/><path d="M777.6,1782.6 L789.6,1791.2 L777.6,1799.8"/></g>
<g class="ic" stroke="#bfbfbf" stroke-width="2"><path d="M991.2,1787.2 L1000.6,1799.4 L1010,1787.2"/></g>
</svg>
<div class="a" style="left:752px;top:700px;width:150px;height:66px;overflow:hidden;background:#fff"><div class="a" style="left:14px;top:17px;width:150px;height:32px;background:#dbe8fb;filter:blur(10px);border-radius:16px"></div><div class="a" style="left:40px;top:24px;width:60px;height:18px;background:#d0e2f9;filter:blur(8px);border-radius:9px"></div></div>
<div class="a" style="left:740px;top:984px;width:144px;height:50px;overflow:hidden;background:#fff"><div class="a" style="left:14px;top:10px;width:150px;height:30px;background:#dbe8fb;filter:blur(9px);border-radius:15px"></div><div class="a" style="left:40px;top:16px;width:50px;height:16px;background:#d0e2f9;filter:blur(7px);border-radius:8px"></div></div>
<div class="a" style="left:748px;top:1085px;width:62px;height:54px;overflow:hidden;background:#fff"><div class="a" style="left:12px;top:11px;width:70px;height:30px;background:#dbe8fb;filter:blur(9px);border-radius:15px"></div></div>
<div class="a" style="left:450px;top:1716px;width:3001px;height:23.5px;border-radius:11px;background:#e3e3e5"></div>
<div class="a td" style="left:489px;top:1777px">共 5 条</div>
<div class="a" style="left:671px;top:1762px;width:64px;height:64px;border:2px solid #0b6be0;border-radius:14px;background:#fff"><div class="a" style="left:0;top:16px;width:60px;text-align:center;font-weight:bold;color:#0b6be0">1</div></div>
<div class="a" style="left:847px;top:1762px;width:186px;height:64px;border:2px solid #e0e0e0;border-radius:14px;background:#fff"><div class="a td" style="left:22px;top:14px">20 条/页</div><svg class="a" style="left:0;top:0" width="182" height="60" viewBox="849 1764 182 60"><path class="ic" stroke="#bfbfbf" stroke-width="2" d="M991.2,1787.2 L1000.6,1799.4 L1010,1787.2"/></svg></div>
<div class="a" style="left:457px;top:1864px;color:#6b6e73">Powered by <span style="color:#2a7de1">handsfree.work</span></div>
<div class="a" style="left:829px;top:1865px;width:2px;height:26px;background:#d4d4d8"></div>
<div class="a" style="left:3600px;top:1864px;width:231px;text-align:right;color:#6b6e73">v1.37.16</div>
</body></html>
